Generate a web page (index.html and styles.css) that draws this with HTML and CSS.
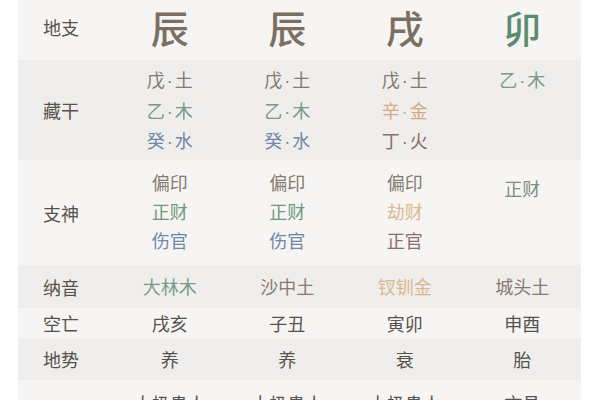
FILE: index.html
```html
<!DOCTYPE html>
<html lang="zh-CN">
<head>
<meta charset="utf-8">
<link rel="stylesheet" href="styles.css">
</head>
<body>
<div class="chart">
  <div class="row light r-branch">
    <div class="label">地支</div>
    <div class="cell big earth">辰</div>
    <div class="cell big earth">辰</div>
    <div class="cell big earth">戌</div>
    <div class="cell big wood">卯</div>
  </div>
  <div class="row dark r-hidden">
    <div class="label">藏干</div>
    <div class="cell stack"><span class="earth">戊<i class="dot">·</i>土</span><span class="wood">乙<i class="dot">·</i>木</span><span class="water">癸<i class="dot">·</i>水</span></div>
    <div class="cell stack"><span class="earth">戊<i class="dot">·</i>土</span><span class="wood">乙<i class="dot">·</i>木</span><span class="water">癸<i class="dot">·</i>水</span></div>
    <div class="cell stack"><span class="earth">戊<i class="dot">·</i>土</span><span class="metal">辛<i class="dot">·</i>金</span><span class="fire">丁<i class="dot">·</i>火</span></div>
    <div class="cell stack"><span class="wood">乙<i class="dot">·</i>木</span></div>
  </div>
  <div class="row light r-gods">
    <div class="label">支神</div>
    <div class="cell stack"><span class="earth">偏印</span><span class="wood2">正财</span><span class="water">伤官</span></div>
    <div class="cell stack"><span class="earth">偏印</span><span class="wood2">正财</span><span class="water">伤官</span></div>
    <div class="cell stack"><span class="earth">偏印</span><span class="metal2">劫财</span><span class="fire">正官</span></div>
    <div class="cell stack lower"><span class="wood3">正财</span></div>
  </div>
  <div class="row dark r-nayin">
    <div class="label">纳音</div>
    <div class="cell"><span class="wood">大林木</span></div>
    <div class="cell"><span class="earth">沙中土</span></div>
    <div class="cell"><span class="metal2">钗钏金</span></div>
    <div class="cell"><span class="earth">城头土</span></div>
  </div>
  <div class="row light r-void">
    <div class="label">空亡</div>
    <div class="cell plain">戌亥</div>
    <div class="cell plain">子丑</div>
    <div class="cell plain">寅卯</div>
    <div class="cell plain">申酉</div>
  </div>
  <div class="row dark r-stage">
    <div class="label">地势</div>
    <div class="cell plain">养</div>
    <div class="cell plain">养</div>
    <div class="cell plain">衰</div>
    <div class="cell plain">胎</div>
  </div>
  <div class="row light r-stars">
    <div class="label"></div>
    <div class="cell plain">太极贵人</div>
    <div class="cell plain">太极贵人</div>
    <div class="cell plain">太极贵人</div>
    <div class="cell plain">文昌</div>
  </div>
</div>
</body>
</html>
```

FILE: styles.css
```css
html, body {
  margin: 0;
  padding: 0;
  background: #ffffff;
}
body {
  font-family: "Noto Sans CJK SC", "Noto Sans", sans-serif;
  overflow: hidden;
  height: 400px;
}
.chart {
  margin-left: 18px;
  width: 563px;
  display: flex;
  flex-direction: column;
}
.row {
  display: grid;
  grid-template-columns: 93px repeat(4, 1fr);
  align-items: center;
}
.light { background: #f6f5f3; }
.dark { background: #efeeec; }
.label {
  padding-left: 25px;
  font-size: 18px;
  color: #57524d;
  line-height: 24px;
}
.cell {
  text-align: center;
  font-size: 18px;
  line-height: 29px;
}
.dot {
  font-style: normal;
  font-family: "Liberation Sans", sans-serif;
  margin: 0 2px;
}
.stack {
  display: flex;
  flex-direction: column;
  align-items: center;
  align-self: start;
}
.r-branch { height: 54px; padding-bottom: 6px; }
.r-hidden { height: 100px; }
.r-hidden .stack { padding-top: 5px; line-height: 28.5px; }
.r-gods { height: 105px; }
.r-gods .stack { padding-top: 8px; }
.r-gods .stack.lower { padding-top: 14px; }
.r-nayin { height: 43px; }
.r-void { height: 30px; }
.r-stage { height: 42px; }
.r-stars { height: 40px; align-items: start; padding-top: 9px; }
.big {
  font-size: 38px;
  font-weight: 500;
  line-height: 44px;
}
.earth { color: #857a70; }
.big.earth { color: #7b6f63; }
.big.wood { color: #5b8b70; }
.wood { color: #79998a; }
.wood2 { color: #6f9a80; }
.wood3 { color: #7b8f84; }
.water { color: #6f87a8; }
.metal { color: #d3a97f; }
.metal2 { color: #d9b88f; }
.fire { color: #8b6f6e; }
.plain { color: #57524d; }
```
